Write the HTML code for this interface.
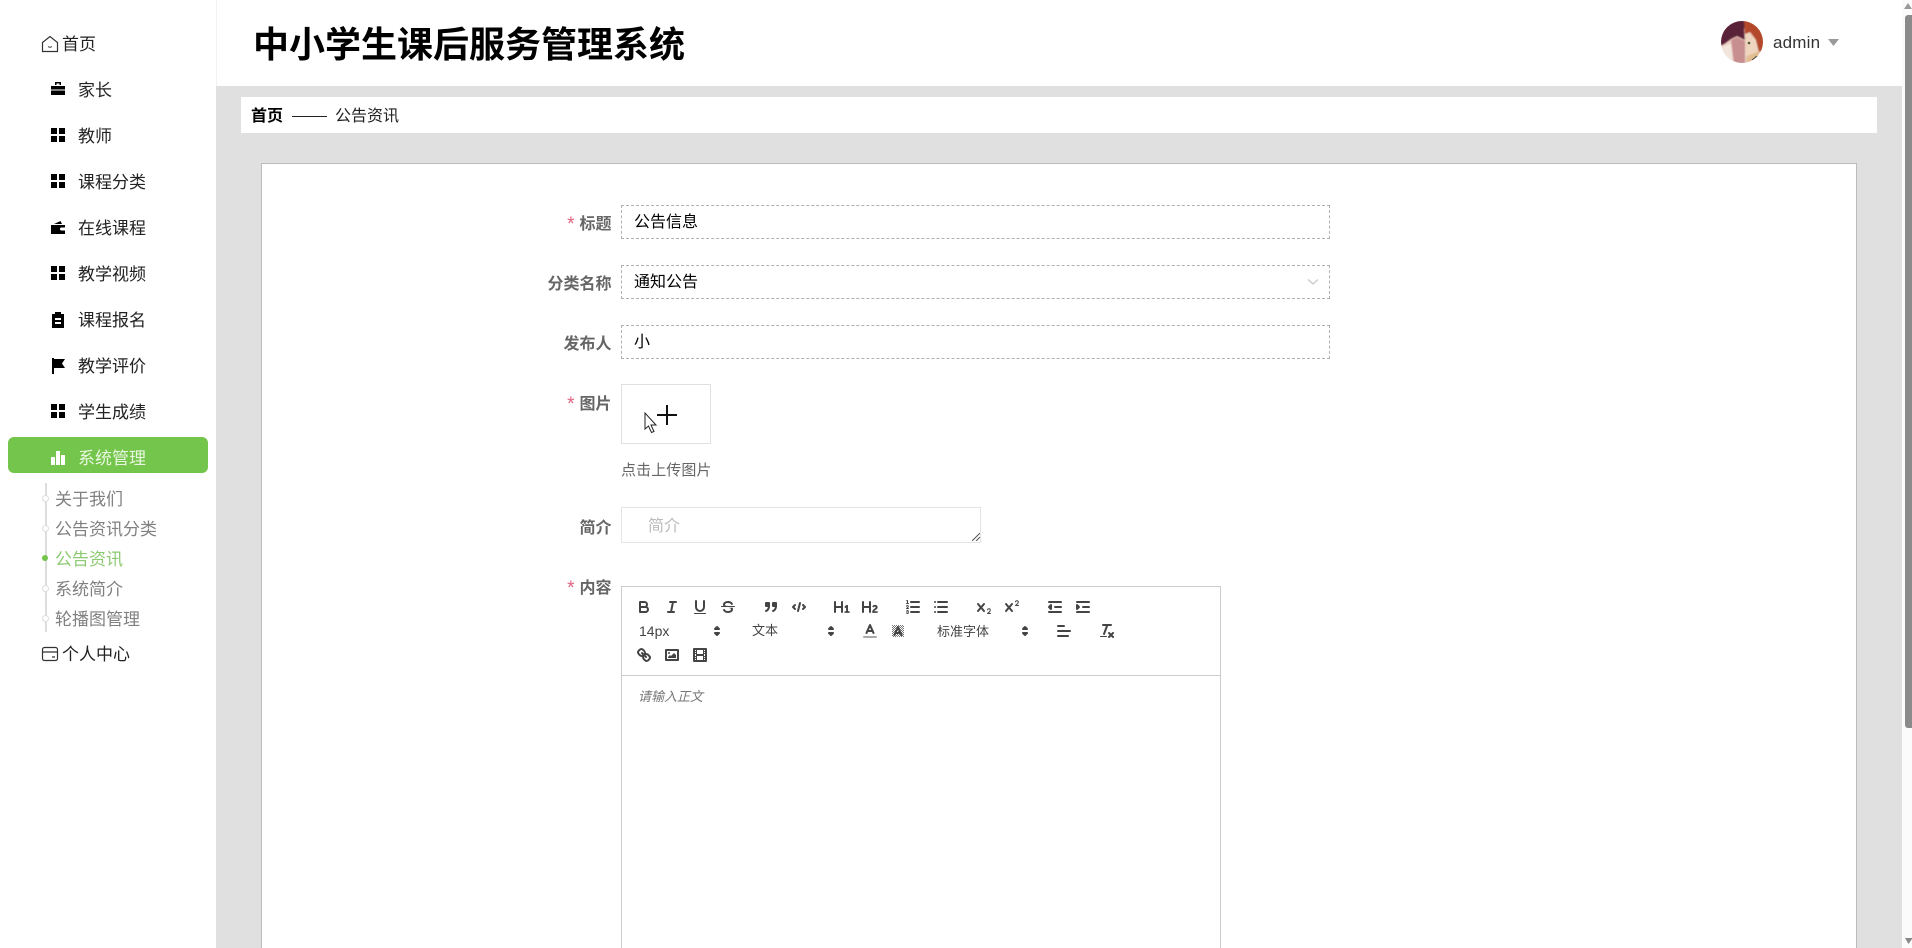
<!DOCTYPE html>
<html lang="zh-CN"><head><meta charset="utf-8"><title>中小学生课后服务管理系统</title>
<style>
html,body{margin:0;padding:0;width:1912px;height:948px;overflow:hidden;background:#fff}
body{font-family:"Liberation Sans","Noto Sans CJK SC",sans-serif;position:relative;color:#000}
.a{position:absolute;white-space:nowrap}
.m{font-size:17px;line-height:24px;color:#222;left:78px}
.ic{position:absolute;left:49px;width:18px;height:18px;fill:#000}
.s{font-size:17px;line-height:24px;color:#808080;left:55px}
.d{position:absolute;left:42px;width:5px;height:5px;border-radius:50%;background:#fff;border:1px solid #ddd}
.lb{font-size:16px;line-height:24px;font-weight:700;color:#666;text-align:right;right:1300.500px}
.lb i{font-style:normal;color:#e0637f;font-weight:400;margin-right:4px;font-size:19px;line-height:0;position:relative;top:1px;left:-1px}
.in{position:absolute;left:621px;height:32px;border:1px dashed #b0b0b0;font-size:16px;line-height:34px;padding-left:12px;box-sizing:content-box;width:695px}
.q{position:absolute;width:18px;height:18px;fill:none;stroke:#444;stroke-width:2;stroke-linecap:round;stroke-linejoin:round}
.q .f{fill:#444;stroke:none}
.q .t{stroke-width:1}
.p{font-size:13px;line-height:18px;color:#444}
</style></head><body>

<!-- content background -->
<div class="a" style="left:216px;top:0;width:1686px;height:86px;background:#fff;border-left:1px solid #f2f2f2;box-sizing:border-box"></div>
<div class="a" style="left:216px;top:86px;width:1686px;height:862px;background:#e0e0e0"></div>
<div class="a" style="left:1902px;top:0;width:10px;height:948px;background:#fbfbfb"></div>
<div class="a" style="left:1905px;top:15px;width:7px;height:713px;background:#8a8a8a;border-radius:3px 0 0 3px"></div>
<svg class="a" style="left:1904px;top:3px" width="8" height="6"><path d="M4 0L8 6H0Z" fill="#999"/></svg>
<svg class="a" style="left:1905px;top:938px" width="7" height="6"><path d="M0 0H7V1L3.500 6Z" fill="#888"/></svg>

<!-- header -->
<div class="a" style="left:253px;top:18px;font-size:36px;line-height:54px;font-weight:700;color:#000">中小学生课后服务管理系统</div>
<svg class="a" style="left:1720px;top:20px" width="44" height="44" viewBox="0 0 44 44">
<defs><clipPath id="c"><circle cx="22" cy="22" r="21"/></clipPath><filter id="b"><feGaussianBlur stdDeviation=".8"/></filter></defs>
<g clip-path="url(#c)"><rect width="44" height="44" fill="#ecd3c6"/>
<g filter="url(#b)"><path d="M0 0H26L24 10L25 20L17 16L11 19L4 24L0 26Z" fill="#5a2238"/><path d="M24 0H44V30L39 32L36 20L30 12L25 14Z" fill="#b34a2c"/><path d="M25 15L30 13L35 19L37 29L33 36L26 36Z" fill="#efd5bd"/><path d="M11 20L17 17L25 21V44H14Z" fill="#c88f90"/><path d="M0 28L11 24L13 44H0Z" fill="#f2e6dc"/><path d="M27 36L39 31V44H26Z" fill="#e2bd92"/></g><circle cx="29" cy="23" r="1.300" fill="#4b5a3e"/><path d="M32 40L37 36" stroke="#443" stroke-width="1"/></g></svg>
<div class="a" style="left:1773px;top:30px;font-size:17px;line-height:26px;color:#333;letter-spacing:.2px">admin</div>
<svg class="a" style="left:1828px;top:39px" width="11" height="7"><path d="M0 0H11L5.500 7Z" fill="#999"/></svg>

<!-- breadcrumb -->
<div class="a" style="left:241px;top:97px;width:1636px;height:36px;background:#fff"></div>
<div class="a" style="left:251px;top:105px;font-size:16px;line-height:24px;font-weight:700">首页</div>
<div class="a" style="left:292px;top:116px;width:35px;height:1px;background:#222"></div>
<div class="a" style="left:335px;top:105px;font-size:16px;line-height:24px;color:#222">公告资讯</div>

<!-- card -->
<div class="a" style="left:261px;top:163px;width:1596px;height:800px;background:#fff;border:1px solid #bbb;box-sizing:border-box"></div>

<!-- sidebar -->
<svg class="ic" style="left:41px;top:35px" viewBox="0 0 18 18"><path d="M1.500 7.500L9 1.500L16.500 7.500V16.500H1.500Z" fill="none" stroke="#333" stroke-width="1.200"/><path d="M7 11.500Q9 13 11 11.500" fill="none" stroke="#333"/></svg>
<div class="a m" style="left:62px;top:33px">首页</div>

<svg class="ic" style="top:80px" viewBox="0 0 18 18"><path d="M6 2H12V5H6ZM2 6H16V9.500H2ZM2 10.500H16V15H2Z"/><path d="M7.500 3.500H10.500V5H7.500Z" fill="#fff"/></svg>
<div class="a m" style="top:79px">家长</div>
<svg class="ic" style="top:126px" viewBox="0 0 18 18"><path d="M2 2H8V8H2ZM10 2H16V8H10ZM2 10H8V16H2ZM10 10H16V16H10Z"/></svg>
<div class="a m" style="top:125px">教师</div>
<svg class="ic" style="top:172px" viewBox="0 0 18 18"><path d="M2 2H8V8H2ZM10 2H16V8H10ZM2 10H8V16H2ZM10 10H16V16H10Z"/></svg>
<div class="a m" style="top:171px">课程分类</div>
<svg class="ic" style="top:219px" viewBox="0 0 18 18"><path d="M2 6H16V8.500H12.500A1.500 1.500 0 0 0 12.500 11.500H16V15H2ZM5 5L11.500 2L13 5Z"/></svg>
<div class="a m" style="top:217px">在线课程</div>
<svg class="ic" style="top:264px" viewBox="0 0 18 18"><path d="M2 2H8V8H2ZM10 2H16V8H10ZM2 10H8V16H2ZM10 10H16V16H10Z"/></svg>
<div class="a m" style="top:263px">教学视频</div>
<svg class="ic" style="top:311px" viewBox="0 0 18 18"><path fill-rule="evenodd" d="M6 1H12V3H15V17H3V3H6ZM6 7V9H12V7ZM6 11V13H12V11Z"/></svg>
<div class="a m" style="top:309px">课程报名</div>
<svg class="ic" style="top:357px" viewBox="0 0 18 18"><path d="M3 1H5V2H16L13 6.500L16 11H5V17H3Z"/></svg>
<div class="a m" style="top:355px">教学评价</div>
<svg class="ic" style="top:402px" viewBox="0 0 18 18"><path d="M2 2H8V8H2ZM10 2H16V8H10ZM2 10H8V16H2ZM10 10H16V16H10Z"/></svg>
<div class="a m" style="top:401px">学生成绩</div>

<div class="a" style="left:8px;top:437px;width:200px;height:36px;background:#74c54b;border-radius:6px"></div>
<svg class="ic" style="top:449px;fill:#fff" viewBox="0 0 18 18"><path d="M2 8H6V16H2ZM7 2H11V16H7ZM12 6H16V16H12Z"/></svg>
<div class="a m" style="top:447px;color:#e9f6df">系统管理</div>

<div class="a" style="left:44.500px;top:483px;width:2px;height:149px;background:#ddd"></div>
<div class="d" style="top:495px"></div><div class="d" style="top:525px"></div>
<div class="a" style="left:42px;top:555px;width:6px;height:6px;border-radius:50%;background:#74c54b"></div>
<div class="d" style="top:585px"></div><div class="d" style="top:615px"></div>
<div class="a s" style="top:488px">关于我们</div>
<div class="a s" style="top:518px">公告资讯分类</div>
<div class="a s" style="top:548px;color:#8cc972">公告资讯</div>
<div class="a s" style="top:578px">系统简介</div>
<div class="a s" style="top:608px">轮播图管理</div>

<svg class="ic" style="left:41px;top:645px" viewBox="0 0 18 18"><rect x="1.500" y="2.500" width="15" height="13" rx="2" fill="none" stroke="#333" stroke-width="1.200"/><path d="M1.500 7H16.500M11 12H14" fill="none" stroke="#333" stroke-width="1.200"/></svg>
<div class="a m" style="left:62px;top:643px">个人中心</div>

<!-- form -->
<div class="a lb" style="top:213px"><i>*</i>标题</div>
<div class="in" style="top:205px">公告信息</div>
<div class="a lb" style="top:273px">分类名称</div>
<div class="in" style="top:265px">通知公告</div>
<svg class="a" style="left:1307px;top:278px" width="12" height="8"><path d="M1 1.500L6 6L11 1.500" fill="none" stroke="#c6c6c6" stroke-width="1.200"/></svg>
<div class="a lb" style="top:333px">发布人</div>
<div class="in" style="top:325px">小</div>

<div class="a lb" style="top:393px"><i>*</i>图片</div>
<div class="a" style="left:621px;top:384px;width:90px;height:60px;border:1px solid #e0e0e0;box-sizing:border-box"></div>
<div class="a" style="left:657px;top:414px;width:20px;height:2px;background:#111"></div>
<div class="a" style="left:666px;top:405px;width:2px;height:20px;background:#111"></div>
<svg class="a" style="left:644px;top:412px" width="15" height="22" viewBox="0 0 15 22"><path d="M1 1V17L4.500 14L7.500 20.500L10 19.500L7 13H12Z" fill="#fff" stroke="#222" stroke-width="1"/></svg>
<div class="a" style="left:621px;top:459px;font-size:15px;line-height:24px;color:#666;letter-spacing:.1px">点击上传图片</div>

<div class="a lb" style="top:517px">简介</div>
<div class="a" style="left:621px;top:507px;width:360px;height:36px;border:1px solid #e4e4e4;box-sizing:border-box"></div>
<div class="a" style="left:648px;top:515px;font-size:16px;line-height:24px;color:#bbb">简介</div>
<svg class="a" style="left:972px;top:533px" width="8" height="8"><path d="M0 8L8 0M4 8L8 4" stroke="#555" stroke-width="1"/></svg>

<div class="a lb" style="top:577px"><i>*</i>内容</div>
<div class="a" style="left:621px;top:586px;width:600px;height:380px;border:1px solid #ccc;box-sizing:border-box"></div>
<div class="a" style="left:621px;top:675px;width:600px;height:1px;background:#ccc"></div>
<div class="a" style="left:638px;top:687px;font-size:13px;line-height:20px;font-style:italic;color:#777">请输入正文</div>

<!-- toolbar row 1 -->
<svg class="q" style="left:635px;top:598px" viewBox="0 0 18 18"><path d="M5,4H9.500A2.500,2.500,0,0,1,12,6.500v0A2.500,2.500,0,0,1,9.500,9H5A0,0,0,0,1,5,9V4A0,0,0,0,1,5,4Z"/><path d="M5,9h5.500A2.500,2.500,0,0,1,13,11.500v0A2.500,2.500,0,0,1,10.500,14H5a0,0,0,0,1,0,0V9A0,0,0,0,1,5,9Z"/></svg>
<svg class="q" style="left:663px;top:598px" viewBox="0 0 18 18"><line x1="7" x2="13" y1="4" y2="4"/><line x1="5" x2="11" y1="14" y2="14"/><line x1="8" x2="10" y1="14" y2="4"/></svg>
<svg class="q" style="left:691px;top:598px" viewBox="0 0 18 18"><path d="M5,3V9a4.012,4.012,0,0,0,4,4H9a4.012,4.012,0,0,0,4-4V3"/><rect class="f" height="1" rx=".5" ry=".5" width="12" x="3" y="15"/></svg>
<svg class="q" style="left:719px;top:598px" viewBox="0 0 18 18"><line class="t" x1="15.500" x2="2.500" y1="8.500" y2="8.500"/><path class="f" d="M9.007,8C6.542,7.791,6,7.519,6,6.500,6,5.792,7.283,5,9,5c1.571,0,2.765.679,2.969,1.309a1,1,0,0,0,1.900-.617C13.356,4.106,11.354,3,9,3,6.200,3,4,4.538,4,6.500a3.200,3.200,0,0,0,.5,1.843Z"/><path class="f" d="M8.984,10C11.457,10.208,12,10.479,12,11.500c0,.708-1.283,1.500-3,1.500-1.571,0-2.765-.679-2.969-1.309a1,1,0,1,0-1.900.617C4.644,13.894,6.646,15,9,15c2.800,0,5-1.538,5-3.500a3.200,3.200,0,0,0-.5-1.843Z"/></svg>
<svg class="q" style="left:762px;top:598px" viewBox="0 0 18 18"><rect height="3" width="3" x="4" y="5" fill="#444"/><rect height="3" width="3" x="11" y="5" fill="#444"/><path d="M7,8c0,4.031-3,5-3,5"/><path d="M14,8c0,4.031-3,5-3,5"/></svg>
<svg class="q" style="left:790px;top:598px" viewBox="0 0 18 18"><polyline points="5 7 3 9 5 11"/><polyline points="13 7 15 9 13 11"/><line x1="10" x2="8" y1="5" y2="13"/></svg>
<svg class="q" style="left:833px;top:598px" viewBox="0 0 18 18"><path class="f" d="M10,4V14a1,1,0,0,1-2,0V10H3v4a1,1,0,0,1-2,0V4A1,1,0,0,1,3,4V8H8V4a1,1,0,0,1,2,0Zm6.068,9.209H14.990V7.599a.541.541,0,0,0-.605-.605h-.627a1.011,1.011,0,0,0-.748.297L11.645,8.566a.544.544,0,0,0-.022.858l.286.308a.539.539,0,0,0,.847.033l.099-.088a1.214,1.214,0,0,0,.242-.353h.022s-.011.309-.011.605V13.209H12.041a.541.541,0,0,0-.605.605v.439a.541.541,0,0,0,.605.605h4.027a.541.541,0,0,0,.605-.605v-.439A.541.541,0,0,0,16.068,13.209Z"/></svg>
<svg class="q" style="left:861px;top:598px" viewBox="0 0 18 18"><path class="f" d="M16.740,13.814v.439a.541.541,0,0,1-.605.605H11.855a.584.584,0,0,1-.649-.605V14.013c0-2.905,3.399-3.422,3.399-4.555a.777.777,0,0,0-.847-.781,1.177,1.177,0,0,0-.836.385c-.275.264-.561.374-.858.132l-.429-.341c-.308-.242-.385-.518-.154-.814a2.972,2.972,0,0,1,2.454-1.177,2.454,2.454,0,0,1,2.684,2.409c0,2.453-3.179,2.927-3.278,3.938h2.794A.541.541,0,0,1,16.740,13.814ZM9,3A1,1,0,0,0,8,4V8H3V4A1,1,0,0,0,1,4V14a1,1,0,0,0,2,0V10H8v4a1,1,0,0,0,2,0V4A1,1,0,0,0,9,3Z"/></svg>
<svg class="q" style="left:904px;top:598px" viewBox="0 0 18 18"><line x1="7" x2="15" y1="4" y2="4"/><line x1="7" x2="15" y1="9" y2="9"/><line x1="7" x2="15" y1="14" y2="14"/><line class="t" x1="2.500" x2="4.500" y1="5.500" y2="5.500"/><path class="f" d="M3.500,6A0.500,0.500,0,0,1,3,5.500V3.085l-0.276.138A0.500,0.500,0,0,1,2.053,3c-0.124-.247-0.023-0.324.224-0.447l1-.5A0.500,0.500,0,0,1,4,2.500v3A0.500,0.500,0,0,1,3.500,6Z"/><path class="t" d="M4.500,10.500h-2c0-.234,1.850-1.076,1.850-2.234A0.959,0.959,0,0,0,2.500,8.156"/><path class="t" d="M2.500,14.846a0.959,0.959,0,0,0,1.850-.109A0.700,0.700,0,0,0,3.750,14a0.688,0.688,0,0,0,.6-0.736,0.959,0.959,0,0,0-1.850-.109"/></svg>
<svg class="q" style="left:932px;top:598px" viewBox="0 0 18 18"><line x1="6" x2="15" y1="4" y2="4"/><line x1="6" x2="15" y1="9" y2="9"/><line x1="6" x2="15" y1="14" y2="14"/><line x1="3" x2="3" y1="4" y2="4"/><line x1="3" x2="3" y1="9" y2="9"/><line x1="3" x2="3" y1="14" y2="14"/></svg>
<svg class="q" style="left:975px;top:598px" viewBox="0 0 18 18"><path class="f" d="M15.500,15H13.861a3.858,3.858,0,0,0,1.914-2.975,1.800,1.800,0,0,0-1.600-1.751A1.921,1.921,0,0,0,12.021,11.700a0.500,0.500,0,1,0,.957.291h0a0.914,0.914,0,0,1,1.053-.725,0.810,0.810,0,0,1,.744.762c0,1.076-1.170,1.870-1.940,2.431A1.456,1.456,0,0,0,12,15.500a0.500,0.500,0,0,0,.5.5h3A0.500,0.500,0,0,0,15.500,15Z"/><path class="f" d="M9.650,5.241a1,1,0,0,0-1.409.108L6,7.964,3.759,5.349A1,1,0,0,0,2.241,6.651L4.684,9.500,2.241,12.350A1,1,0,0,0,3.759,13.650L6,11.036,8.241,13.650a1,1,0,1,0,1.518-1.300L7.316,9.500,9.759,6.651A1,1,0,0,0,9.650,5.241Z"/></svg>
<svg class="q" style="left:1003px;top:598px" viewBox="0 0 18 18"><path class="f" d="M15.500,7H13.861a4.015,4.015,0,0,0,1.914-2.975,1.800,1.800,0,0,0-1.600-1.751A1.922,1.922,0,0,0,12.021,3.700a0.500,0.500,0,1,0,.957.291,0.917,0.917,0,0,1,1.053-.725,0.810,0.810,0,0,1,.744.762c0,1.077-1.164,1.925-1.934,2.486A1.423,1.423,0,0,0,12,7.500a0.500,0.500,0,0,0,.5.5h3A0.500,0.500,0,0,0,15.500,7Z"/><path class="f" d="M9.650,5.241a1,1,0,0,0-1.409.108L6,7.964,3.759,5.349A1,1,0,0,0,2.241,6.651L4.684,9.500,2.241,12.350A1,1,0,0,0,3.759,13.650L6,11.036,8.241,13.650a1,1,0,1,0,1.518-1.300L7.316,9.500,9.759,6.651A1,1,0,0,0,9.650,5.241Z"/></svg>
<svg class="q" style="left:1046px;top:598px" viewBox="0 0 18 18"><line x1="3" x2="15" y1="14" y2="14"/><line x1="3" x2="15" y1="4" y2="4"/><line x1="9" x2="15" y1="9" y2="9"/><polyline fill="#444" points="5 7 5 11 3 9 5 7"/></svg>
<svg class="q" style="left:1074px;top:598px" viewBox="0 0 18 18"><line x1="3" x2="15" y1="14" y2="14"/><line x1="3" x2="15" y1="4" y2="4"/><line x1="9" x2="15" y1="9" y2="9"/><polyline fill="#444" points="3 7 3 11 5 9 3 7"/></svg>

<!-- toolbar row 2 -->
<div class="a p" style="left:639px;top:622px;font-family:'Liberation Sans',sans-serif;font-size:14px">14px</div>
<svg class="q" style="left:708px;top:622px" viewBox="0 0 18 18"><polygon fill="#444" points="7 11 9 13 11 11 7 11"/><polygon fill="#444" points="7 7 9 5 11 7 7 7"/></svg>
<div class="a p" style="left:752px;top:622px">文本</div>
<svg class="q" style="left:822px;top:622px" viewBox="0 0 18 18"><polygon fill="#444" points="7 11 9 13 11 11 7 11"/><polygon fill="#444" points="7 7 9 5 11 7 7 7"/></svg>
<svg class="q" style="left:861px;top:622px" viewBox="0 0 18 18"><line x1="3" x2="15" y1="15" y2="15" stroke="#aaa"/><polyline points="5.500 11 9 3 12.500 11"/><line x1="11.630" x2="6.380" y1="9" y2="9"/></svg>
<svg class="q" style="left:889px;top:622px" viewBox="0 0 18 18"><defs><pattern id="dz" width="2" height="2" patternUnits="userSpaceOnUse"><rect width="1" height="1" fill="#777" stroke="none"/><rect x="1" y="1" width="1" height="1" fill="#777" stroke="none"/></pattern></defs><rect x="3" y="3" width="12" height="12" fill="url(#dz)" stroke="none"/><polyline points="5.500 13 9 5 12.500 13"/><line x1="11.630" x2="6.380" y1="11" y2="11"/></svg>
<div class="a p" style="left:937px;top:623px">标准字体</div>
<svg class="q" style="left:1016px;top:622px" viewBox="0 0 18 18"><polygon fill="#444" points="7 11 9 13 11 11 7 11"/><polygon fill="#444" points="7 7 9 5 11 7 7 7"/></svg>
<svg class="q" style="left:1055px;top:622px" viewBox="0 0 18 18"><line x1="3" x2="15" y1="9" y2="9"/><line x1="3" x2="13" y1="14" y2="14"/><line x1="3" x2="9" y1="4" y2="4"/></svg>
<svg class="q" style="left:1098px;top:622px" viewBox="0 0 18 18"><line x1="5" x2="13" y1="3" y2="3"/><line x1="6" x2="9.350" y1="12" y2="3"/><line x1="11" x2="15" y1="11" y2="15"/><line x1="15" x2="11" y1="11" y2="15"/><rect class="f" height="1" rx=".5" ry=".5" width="7" x="2" y="14"/></svg>

<!-- toolbar row 3 -->
<svg class="q" style="left:635px;top:646px" viewBox="0 0 18 18"><line x1="7" x2="11" y1="7" y2="11"/><path d="M8.900,4.577a3.476,3.476,0,0,1,.36,4.679A3.476,3.476,0,0,1,4.577,8.900C3.185,7.500,2.035,6.400,4.217,4.217S7.500,3.185,8.900,4.577Z"/><path d="M13.423,9.100a3.476,3.476,0,0,0-4.679-.36,3.476,3.476,0,0,0,.36,4.679c1.392,1.392,2.500,2.542,4.679.36S14.815,10.500,13.423,9.100Z"/></svg>
<svg class="q" style="left:663px;top:646px" viewBox="0 0 18 18"><rect height="10" width="12" x="3" y="4"/><circle class="f" cx="6" cy="7" r="1"/><polyline class="f" points="5 12 5 11 7 9 8 10 11 7 13 9 13 12 5 12"/></svg>
<svg class="q" style="left:691px;top:646px" viewBox="0 0 18 18"><rect height="12" width="12" x="3" y="3"/><rect class="f" height="12" width="1" x="5" y="3"/><rect class="f" height="12" width="1" x="12" y="3"/><rect class="f" height="2" width="8" x="5" y="8"/><rect class="f" height="1" width="3" x="3" y="5"/><rect class="f" height="1" width="3" x="3" y="7"/><rect class="f" height="1" width="3" x="3" y="10"/><rect class="f" height="1" width="3" x="3" y="12"/><rect class="f" height="1" width="3" x="12" y="5"/><rect class="f" height="1" width="3" x="12" y="7"/><rect class="f" height="1" width="3" x="12" y="10"/><rect class="f" height="1" width="3" x="12" y="12"/></svg>

</body></html>
